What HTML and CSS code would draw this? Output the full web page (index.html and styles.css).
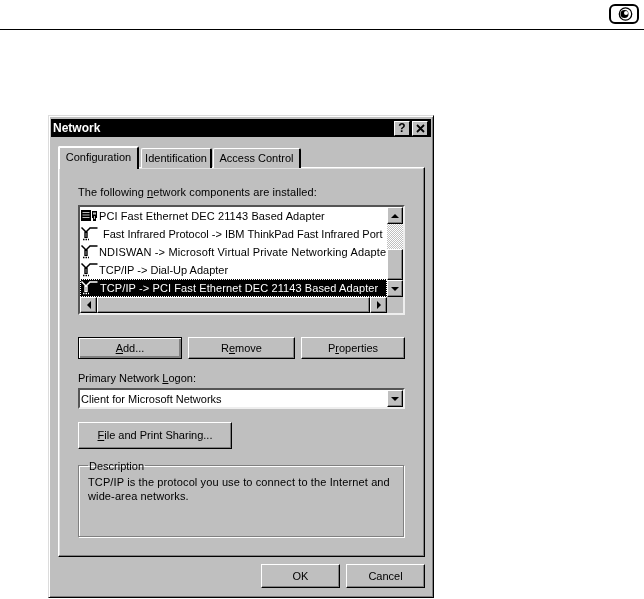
FILE: index.html
```html
<!DOCTYPE html>
<html lang="en">
<head>
<meta charset="utf-8">
<title>Network</title>
<link rel="stylesheet" href="styles.css">
</head>
<body>
<svg class="defs" width="0" height="0" aria-hidden="true">
  <symbol id="cable" viewBox="0 0 18 16">
    <path d="M1.5 1.5L6 6L10.5 1.5M10 2H17.5" fill="none" stroke="currentColor" stroke-width="1.5"/>
    <path d="M6 5.5V12" fill="none" stroke="currentColor" stroke-width="3.4"/>
    <path d="M6 7V11" fill="none" stroke="#8a8a8a" stroke-width="1"/>
    <path d="M3 13.5H9" fill="none" stroke="currentColor" stroke-width="1.5" stroke-dasharray="1.5 1"/>
  </symbol>
  <symbol id="card" viewBox="0 0 18 16">
    <path d="M1 2H11V13H1Z" fill="#000"/>
    <path d="M2.5 4.5H9.5M2.5 7H9.5M2.5 9.5H9.5" stroke="#bdbdbd" stroke-width="1"/>
    <path d="M12 3H17V10H16V13H13V10H12Z" fill="#000"/>
    <path d="M13 4.5H16V6.5H13Z" fill="#bdbdbd"/>
    <path d="M14 8H15V11H14Z" fill="#bdbdbd"/>
  </symbol>
</svg>

<header class="page-header">
  <svg class="mark" width="30" height="20" viewBox="0 0 30 20" aria-hidden="true">
    <rect x="1" y="1" width="28" height="18" rx="5" fill="#fff" stroke="#000" stroke-width="2"/>
    <circle cx="16.5" cy="10" r="6.2" fill="#fff" stroke="#000" stroke-width="1.3"/>
    <circle cx="15.5" cy="10" r="4" fill="#000"/>
    <circle cx="17" cy="9" r="2" fill="#fff"/>
  </svg>
</header>

<main class="stage">
  <section class="window">
    <div class="titlebar">
      <span class="title">Network</span>
      <span class="caption-buttons">
        <span class="caption-btn">?</span>
        <span class="caption-btn caption-close">
          <svg width="9" height="9" viewBox="0 0 9 9" aria-hidden="true"><path d="M1 1L8 8M8 1L1 8" stroke="#000" stroke-width="1.8"/></svg>
        </span>
      </span>
    </div>

    <div class="client">
      <nav class="tabs">
        <span class="tab tab-active tab-config">Configuration</span>
        <span class="tab tab-ident">Identification</span>
        <span class="tab tab-access">Access Control</span>
      </nav>

      <div class="panel">
        <label class="label label-list">The following <u>n</u>etwork components are installed:</label>

        <div class="listbox">
          <ul class="rows">
            <li class="row row-pci"><svg class="row-icon" width="18" height="16"><use href="#card"/></svg><span>PCI Fast Ethernet DEC 21143 Based Adapter</span></li>
            <li class="row row-shift"><svg class="row-icon" width="18" height="16"><use href="#cable"/></svg><span>Fast Infrared Protocol -&gt; IBM ThinkPad Fast Infrared Port</span></li>
            <li class="row row-ndis"><svg class="row-icon" width="18" height="16"><use href="#cable"/></svg><span>NDISWAN -&gt; Microsoft Virtual Private Networking Adapter</span></li>
            <li class="row"><svg class="row-icon" width="18" height="16"><use href="#cable"/></svg><span>TCP/IP -&gt; Dial-Up Adapter</span></li>
            <li class="row row-selected"><svg class="row-icon" width="18" height="16"><use href="#cable"/></svg><span>TCP/IP -&gt; PCI Fast Ethernet DEC 21143 Based Adapter</span></li>
          </ul>
          <div class="vscroll">
            <span class="sb-btn"><i class="arrow arrow-up"></i></span>
            <span class="sb-track"></span>
            <span class="sb-thumb"></span>
            <span class="sb-btn"><i class="arrow arrow-down"></i></span>
          </div>
          <div class="hscroll">
            <span class="sb-btn"><i class="arrow arrow-left"></i></span>
            <span class="sb-thumb"></span>
            <span class="sb-btn"><i class="arrow arrow-right"></i></span>
          </div>
          <span class="corner"></span>
        </div>

        <div class="actions">
          <button class="btn btn-default"><u>A</u>dd...</button>
          <button class="btn">R<u>e</u>move</button>
          <button class="btn">P<u>r</u>operties</button>
        </div>

        <label class="label label-logon">Primary Network <u>L</u>ogon:</label>
        <div class="combo">
          <span class="combo-value">Client for Microsoft Networks</span>
          <span class="sb-btn combo-btn"><i class="arrow arrow-down"></i></span>
        </div>

        <button class="btn btn-share"><u>F</u>ile and Print Sharing...</button>

        <fieldset class="group">
          <legend class="group-title">Description</legend>
          <p class="group-text">TCP/IP is the protocol you use to connect to the Internet and wide-area networks.</p>
        </fieldset>
      </div>

      <footer class="footer">
        <button class="btn btn-footer">OK</button>
        <button class="btn btn-footer">Cancel</button>
      </footer>
    </div>
  </section>
</main>
</body>
</html>
```

FILE: styles.css
```css
* { box-sizing: border-box; }

html, body {
  margin: 0;
  padding: 0;
  background: #fff;
}

body {
  width: 644px;
  height: 599px;
  overflow: hidden;
  font-family: "Liberation Sans", Arial, sans-serif;
  font-size: 11px;
  line-height: 14px;
  color: #000;
}

.defs { position: absolute; }

.page-header {
  height: 30px;
  border-bottom: 1px solid #000;
  display: flex;
  justify-content: flex-end;
  align-items: flex-start;
  padding: 4px 5px 0 0;
}

.mark { display: block; }

.stage { padding: 85px 0 0 48px; }

.window {
  width: 386px;
  height: 483px;
  background: #bfbfbf;
  border: 1px solid;
  border-color: #dcdcdc #000 #000 #dcdcdc;
  box-shadow: inset 1px 1px 0 #fff, inset -1px -1px 0 #808080;
  padding: 3px 2px 2px 2px;
  filter: blur(0.35px);
}

.titlebar {
  height: 18px;
  background: #000;
  color: #fff;
  display: flex;
  align-items: center;
  justify-content: space-between;
  padding: 0 3px 0 2px;
}

.title { font-weight: bold; font-size: 12px; }

.caption-buttons { display: flex; gap: 2px; }

.caption-btn {
  width: 16px;
  height: 15px;
  background: #bfbfbf;
  color: #000;
  font-weight: bold;
  font-size: 12px;
  line-height: 14px;
  text-align: center;
  border: 1px solid;
  border-color: #fff #000 #000 #fff;
  display: flex;
  align-items: center;
  justify-content: center;
}

.client { padding: 9px 6px 0 7px; }

.tabs {
  display: flex;
  align-items: flex-end;
  height: 22px;
  position: relative;
  z-index: 1;
  margin-bottom: -1px;
}

.tab {
  height: 20px;
  background: #bfbfbf;
  border: 1px solid #808080;
  border-top-color: #fff;
  border-left-color: #fff;
  border-right: 2px solid #000;
  border-bottom: 0;
  border-radius: 2px 2px 0 0;
  text-align: center;
  line-height: 19px;
}

.tab-config { width: 81px; margin-right: 2px; }
.tab-ident { width: 71px; margin-right: 1px; }
.tab-access { width: 88px; }

.tab-active {
  height: 23px;
  line-height: 18px;
  margin-bottom: -1px;
  border-top-width: 2px;
  border-left-width: 2px;
}

.panel {
  height: 390px;
  border: 1px solid;
  border-color: #fff #000 #000 #fff;
  box-shadow: inset -1px -1px 0 #808080, inset 1px 1px 0 #e0e0e0;
  padding: 17px 18px 0 19px;
}

.label { display: block; white-space: nowrap; }
.label-list { margin-bottom: 6px; letter-spacing: 0.085px; }
.label-logon { margin-top: 12px; margin-bottom: 3px; }

.listbox {
  height: 110px;
  width: 327px;
  border: 2px solid;
  border-color: #555 #eee #eee #555;
  display: grid;
  grid-template-columns: 1fr 16px;
  grid-template-rows: 90px 16px;
  background: #fff;
}

.rows {
  list-style: none;
  margin: 0;
  padding: 0;
  min-width: 0;
  overflow: hidden;
}

.row {
  height: 18px;
  display: flex;
  align-items: center;
  gap: 1px;
  padding-left: 0;
  white-space: nowrap;
}

.row-pci { letter-spacing: 0.1px; }
.row-shift { gap: 5px; }
.row-ndis { letter-spacing: 0.15px; }

.row-selected {
  background: #000;
  color: #fff;
  gap: 2px;
  letter-spacing: 0.1px;
  outline: 1px dotted #fff;
  outline-offset: -1px;
}

.row-icon { flex: none; display: block; }

.vscroll {
  display: flex;
  flex-direction: column;
}

.vscroll .sb-track {
  height: 25px;
  background: repeating-conic-gradient(#fff 0 25%, #bfbfbf 0 50%) 0 0 / 2px 2px;
}

.vscroll .sb-thumb { flex: 1; }

.vscroll .sb-btn { height: 17px; }

.hscroll {
  display: flex;
  background: #bfbfbf;
}

.hscroll .sb-btn { width: 17px; }
.hscroll .sb-thumb { flex: 1; }

.corner { background: #bfbfbf; }

.sb-btn, .sb-thumb {
  display: flex;
  align-items: center;
  justify-content: center;
  background: #bfbfbf;
  border: 1px solid;
  border-color: #fff #000 #000 #fff;
  box-shadow: inset -1px -1px 0 #808080;
}

.arrow { display: block; width: 0; height: 0; border: 0 solid transparent; }

.arrow-up { border-width: 0 4px 4px; border-bottom-color: #000; }
.arrow-down { border-width: 4px 4px 0; border-top-color: #000; }
.arrow-left { border-width: 4px 4px 4px 0; border-right-color: #000; }
.arrow-right { border-width: 4px 0 4px 4px; border-left-color: #000; }

.actions {
  display: grid;
  grid-template-columns: 104px 107px 104px;
  gap: 6px;
  margin-top: 22px;
  width: 327px;
}

.btn {
  display: block;
  font: inherit;
  color: #000;
  height: 22px;
  padding: 0 0 1px;
  background: #bfbfbf;
  border: 1px solid;
  border-color: #fff #000 #000 #fff;
  box-shadow: inset -1px -1px 0 #808080;
}

.btn-default {
  border-color: #000;
  box-shadow: inset 1px 1px 0 #fff, inset -2px -2px 0 #808080;
}

.combo {
  height: 21px;
  width: 327px;
  border: 2px solid;
  border-color: #555 #eee #eee #555;
  background: #fff;
  display: flex;
  align-items: center;
  justify-content: space-between;
}

.combo-value { padding-left: 1px; }

.combo-btn { width: 16px; height: 17px; }

.btn-share {
  width: 154px;
  height: 27px;
  margin-top: 13px;
}

.group {
  width: 326px;
  height: 80px;
  margin: 8px 0 0;
  padding: 0 9px;
  min-width: 0;
  border: 1px solid #808080;
  box-shadow: 1px 1px 0 #fff, inset 1px 1px 0 #fff;
}

.group-title {
  padding: 2px 1px 0;
  margin-left: 0;
  line-height: 14px;
}

.group-text {
  margin: 2px 0 0;
  line-height: 14px;
  width: 312px;
  letter-spacing: 0.12px;
}

.footer {
  display: flex;
  justify-content: flex-end;
  gap: 6px;
  margin-top: 7px;
}

.btn-footer { width: 79px; height: 24px; padding: 0; }
```
